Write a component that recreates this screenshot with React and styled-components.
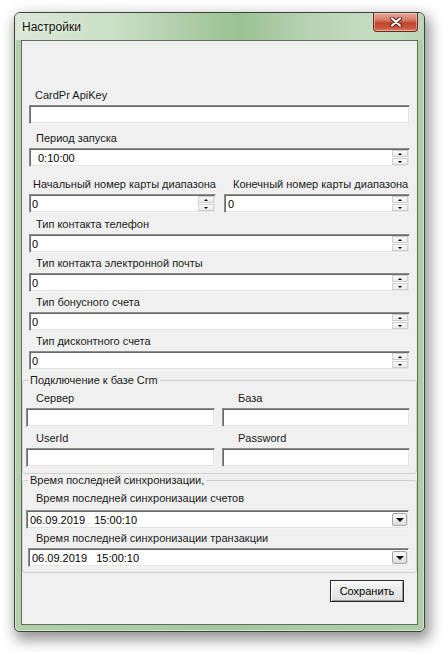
import React from "react";
import styled, { createGlobalStyle } from "styled-components";

const GlobalStyle = createGlobalStyle`
  body {
    margin: 0;
    background: #fff;
    font-family: "Liberation Sans", Arial, sans-serif;
  }
`;

const Page = styled.div`
  padding: 12px 0 0 14px;
  height: 652px;
  box-sizing: border-box;
  overflow: hidden;
`;

const Window = styled.div`
  width: 411px;
  height: 620px;
  box-sizing: border-box;
  border: 1px solid #3b463b;
  border-radius: 6px 6px 5px 5px;
  background: linear-gradient(90deg, #b3cfae 0%, #a7c7a1 50%, #b0cdaa 100%);
  box-shadow: 3px 6px 14px 2px rgba(0, 0, 0, 0.42),
    inset 0 0 0 1px rgba(255, 255, 255, 0.45);
  display: flex;
  flex-direction: column;
  padding-bottom: 6px;
`;

const TitleBar = styled.div`
  height: 27px;
  flex: none;
  display: flex;
  justify-content: space-between;
  align-items: flex-start;
  padding: 0 6px 0 7px;
  border-radius: 5px 5px 0 0;
  background: linear-gradient(
    90deg,
    #d9e8d6 0%,
    #c9dfc5 25%,
    #a9caa3 45%,
    #9cc096 55%,
    #b7d3b2 72%,
    #c6dcc2 88%,
    #bcd6b7 100%
  );
`;

const Title = styled.div`
  margin-top: 6px;
  font-size: 12px;
  line-height: 16px;
  color: #111;
  text-shadow: 0 0 6px rgba(255, 255, 255, 0.9);
`;

const CloseButton = styled.div`
  width: 45px;
  height: 19px;
  box-sizing: border-box;
  border: 1px solid #6b2a20;
  border-top: none;
  border-radius: 0 0 4px 4px;
  background: linear-gradient(180deg, #e5a99b 0%, #d57b66 40%, #c2452c 55%, #c75a3f 85%, #d98a6e 100%);
  box-shadow: inset 0 0 0 1px rgba(255, 220, 210, 0.45);
  display: flex;
  align-items: center;
  justify-content: center;
`;

const Client = styled.div`
  flex: 1;
  margin: 0 6px;
  border: 1px solid #5d6e5d;
  background: #f0f0f0;
  display: flex;
  flex-direction: column;
  min-height: 0;
`;

const TopSection = styled.div`
  padding: 47px 7px 0 7px;
  display: flex;
  flex-direction: column;
`;

const Field = styled.div`
  display: flex;
  flex-direction: column;
  width: ${(p) => (p.$w ? `${p.$w}px` : "auto")};
  margin-left: ${(p) => p.$left ?? 0}px;
`;

const Label = styled.div`
  font-size: 11px;
  line-height: 14px;
  height: 14px;
  color: #1a1a1a;
  white-space: nowrap;
  padding-left: ${(p) => p.$indent ?? 6}px;
  margin-top: ${(p) => p.$top ?? 0}px;
  margin-bottom: ${(p) => p.$gap ?? 3}px;
`;

const Box = styled.div`
  height: 19px;
  box-sizing: border-box;
  display: flex;
  align-items: center;
  background: #fff;
  border: 1px solid;
  border-color: #8d8d8d #f4f4f4 #f4f4f4 #8d8d8d;
  box-shadow: inset 1px 1px 0 #6a6a6a, inset -1px -1px 0 #e3e3e3;
  font-size: 11px;
  color: #000;
  padding-left: ${(p) => p.$pad ?? 2}px;
`;

const Value = styled.span`
  white-space: pre;
  line-height: 14px;
`;

const Spin = styled.div`
  margin-left: auto;
  margin-right: 1px;
  width: 16px;
  height: 15px;
  display: flex;
  flex-direction: column;
  gap: 1px;
`;

const SpinButton = styled.div`
  flex: 1;
  box-sizing: border-box;
  border: 1px solid #d0d0d0;
  background: linear-gradient(180deg, #fbfbfb, #e9e9e9);
  display: flex;
  align-items: center;
  justify-content: center;
`;

const Arrow = styled.div`
  width: 0;
  height: 0;
  border-left: 2px solid transparent;
  border-right: 2px solid transparent;
  ${(p) =>
    p.$down ? "border-top: 2px solid #000;" : "border-bottom: 2px solid #000;"}
`;

const DropButton = styled.div`
  margin-left: auto;
  margin-right: 1px;
  width: 15px;
  height: 13px;
  box-sizing: border-box;
  border: 1px solid #a5a5a5;
  border-radius: 2px;
  background: linear-gradient(180deg, #fafafa 0%, #ececec 50%, #dcdcdc 100%);
  display: flex;
  align-items: center;
  justify-content: center;
`;

const DropArrow = styled.div`
  width: 0;
  height: 0;
  border-left: 4px solid transparent;
  border-right: 4px solid transparent;
  border-top: 4px solid #111;
  margin-top: 1px;
`;

const Row = styled.div`
  display: flex;
  gap: ${(p) => p.$gap ?? 8}px;
`;

const Group = styled.fieldset`
  margin: ${(p) => p.$top ?? 0}px 0 0 0;
  padding: 0 0 ${(p) => p.$bottom ?? 5}px 3px;
  border: 1px solid #d0d0d0;
  border-radius: 3px;
  min-width: 0;
  display: flex;
  flex-direction: column;
`;

const Legend = styled.legend`
  font-size: 11px;
  line-height: 13px;
  padding: 0 2px;
  margin-left: 2px;
  color: #1a1a1a;
`;

const Footer = styled.div`
  display: flex;
  justify-content: flex-end;
  padding: 7px 13px 0 0;
`;

const Button = styled.div`
  width: 74px;
  height: 22px;
  box-sizing: border-box;
  border: 1px solid #262626;
  background: linear-gradient(180deg, #f6f6f6 0%, #ebebeb 50%, #dddddd 100%);
  box-shadow: inset 1px 1px 0 #fff, inset -1px -1px 0 #9a9a9a;
  font-size: 11px;
  color: #000;
  display: flex;
  align-items: center;
  justify-content: center;
`;

function Spinner() {
  return (
    <Spin>
      <SpinButton>
        <Arrow />
      </SpinButton>
      <SpinButton>
        <Arrow $down />
      </SpinButton>
    </Spin>
  );
}

function NumberBox({ value, pad }) {
  return (
    <Box $pad={pad}>
      <Value>{value}</Value>
      <Spinner />
    </Box>
  );
}

function DateBox({ value }) {
  return (
    <Box $pad={3}>
      <Value>{value}</Value>
      <DropButton>
        <DropArrow />
      </DropButton>
    </Box>
  );
}

const numberFields = [
  { label: "Тип контакта телефон", top: 4, gap: 3 },
  { label: "Тип контакта электронной почты", top: 3, gap: 3 },
  { label: "Тип бонусного счета", top: 3, gap: 3 },
  { label: "Тип дисконтного счета", top: 3, gap: 3 },
];

export default function App() {
  return (
    <>
      <GlobalStyle />
      <Page>
        <Window>
          <TitleBar>
            <Title>Настройки</Title>
            <CloseButton>
              <svg width="12" height="10" viewBox="0 0 12 10">
                <path d="M2 1.5 L10 8.5 M10 1.5 L2 8.5" stroke="#4b1e16" strokeWidth="4" strokeLinecap="round" />
                <path d="M2 1.5 L10 8.5 M10 1.5 L2 8.5" stroke="#fff" strokeWidth="2.2" strokeLinecap="round" />
              </svg>
            </CloseButton>
          </TitleBar>
          <Client>
            <TopSection>
              <Field>
                <Label $indent={6}>CardPr ApiKey</Label>
                <Box />
              </Field>
              <Field>
                <Label $indent={7} $top={7}>Период запуска</Label>
                <NumberBox value="0:10:00" pad={8} />
              </Field>
              <Row $gap={8}>
                <Field $w={187}>
                  <Label $indent={4} $top={10}>Начальный номер карты диапазона</Label>
                  <NumberBox value="0" />
                </Field>
                <Field $w={188}>
                  <Label $indent={9} $top={10}>Конечный номер карты диапазона</Label>
                  <NumberBox value="0" pad={3} />
                </Field>
              </Row>
              {numberFields.map((f) => (
                <Field key={f.label}>
                  <Label $indent={7} $top={f.top} $gap={f.gap}>{f.label}</Label>
                  <NumberBox value="0" />
                </Field>
              ))}
            </TopSection>

            <Group $top={4} $bottom={6}>
              <Legend>Подключение к базе Crm</Legend>
              <Row $gap={7}>
                <Field $w={189}>
                  <Label $indent={10} $top={4}>Сервер</Label>
                  <Box />
                </Field>
                <Field $w={188}>
                  <Label $indent={16} $top={4}>База</Label>
                  <Box />
                </Field>
              </Row>
              <Row $gap={7}>
                <Field $w={189}>
                  <Label $indent={10} $top={4}>UserId</Label>
                  <Box />
                </Field>
                <Field $w={188}>
                  <Label $indent={16} $top={4}>Password</Label>
                  <Box />
                </Field>
              </Row>
            </Group>

            <Group $bottom={5}>
              <Legend>Время последней синхронизации,</Legend>
              <Field $w={383}>
                <Label $indent={10} $top={4} $gap={5}>Время последней синхронизации счетов</Label>
                <DateBox value="06.09.2019   15:00:10" />
              </Field>
              <Field $w={381} $left={2}>
                <Label $indent={8} $top={2} $gap={3}>Время последней синхронизации транзакции</Label>
                <DateBox value="06.09.2019   15:00:10" />
              </Field>
            </Group>

            <Footer>
              <Button>Сохранить</Button>
            </Footer>
          </Client>
        </Window>
      </Page>
    </>
  );
}
